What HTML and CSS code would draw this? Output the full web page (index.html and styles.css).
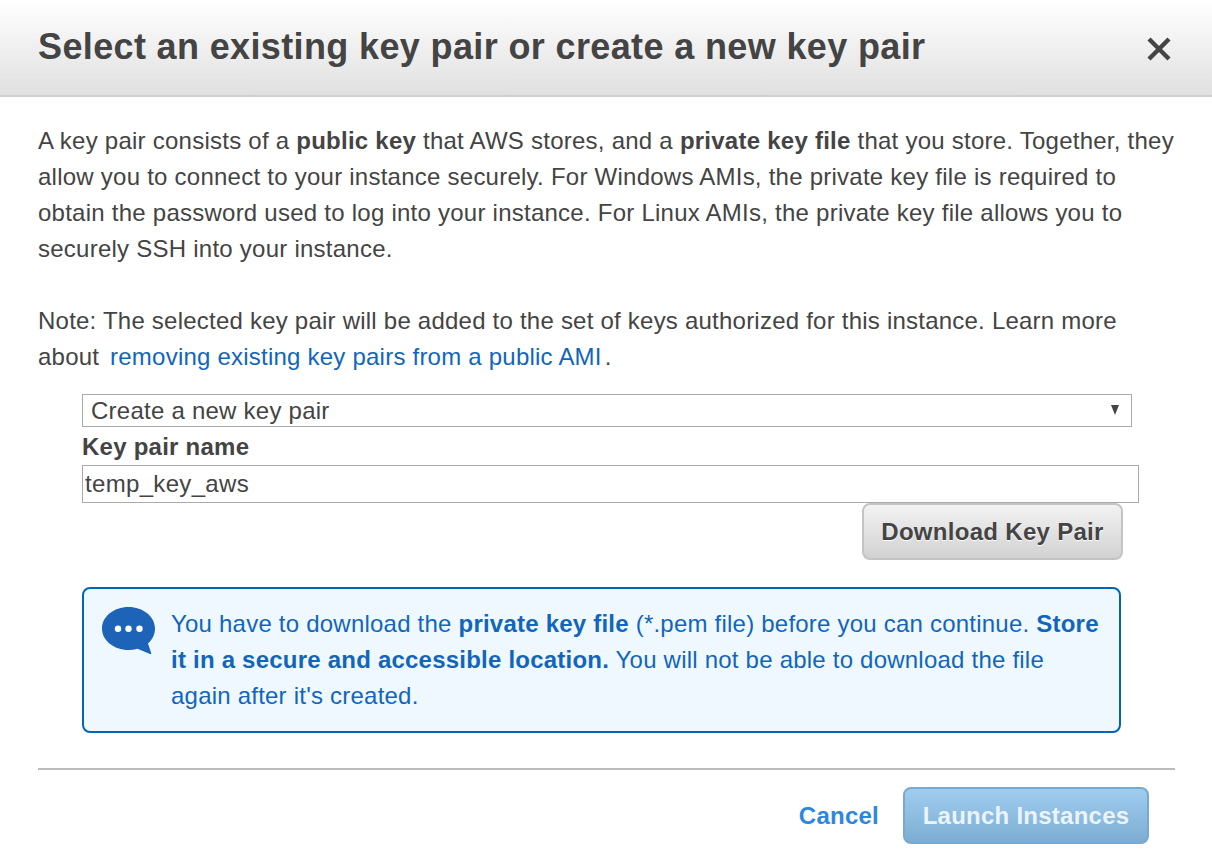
FILE: index.html
```html
<!DOCTYPE html>
<html lang="en">

<head>
    <meta charset="UTF-8">
    <title>Select key pair</title>
    <link rel="stylesheet" href="styles.css">
</head>

<body>
    <div class="dialog">
        <div class="dialog-header">
            <h1>Select an existing key pair or create a new key pair</h1>
            <svg class="close-icon" width="24" height="24" viewBox="0 0 24 24">
                <path d="M2 2L22 22M22 2L2 22" stroke="#444" stroke-width="4.4" fill="none" />
            </svg>
        </div>

        <div class="dialog-body">
            <p>A key pair consists of a <b>public key</b> that AWS stores, and a <b>private key file</b> that you store. Together, they allow you to connect to your instance securely. For Windows AMIs, the private key file is required to obtain the password used to log into your instance. For Linux AMIs, the private key file allows you to securely SSH into your instance.</p>
            <p class="note">Note: The selected key pair will be added to the set of keys authorized for this instance. Learn more about <a class="doc-link" href="#">removing existing key pairs from a public AMI</a>.</p>

            <div class="key-form">
                <div class="select-wrap">
                    <select class="key-select">
                        <option>Create a new key pair</option>
                    </select>
                </div>
                <label class="key-label" for="keyName">Key pair name</label>
                <input class="key-input" id="keyName" type="text" value="temp_key_aws">
                <div class="download-row">
                    <button class="btn-download">Download Key Pair</button>
                </div>

                <div class="info-box">
                    <svg class="info-icon" width="54" height="48" viewBox="0 0 54 48">
                        <path d="M26.500 0C11.900 0 0 9.600 0 21.500C0 33.400 11.900 43 26.500 43C29.500 43 32.500 42.600 35.500 41.800L48 47C49 47.400 49.500 47 49.200 46L46 36.500C50.500 32.500 53 27.300 53 21.500C53 9.600 41.100 0 26.500 0Z" fill="#1d64b8" />
                        <circle cx="16" cy="21.700" r="3.200" fill="#fff" />
                        <circle cx="26.500" cy="21.700" r="3.200" fill="#fff" />
                        <circle cx="37.500" cy="21.700" r="3.200" fill="#fff" />
                    </svg>
                    <div class="info-text">You have to download the <b>private key file</b> (*.pem file) before you can continue. <b>Store it in a secure and accessible location.</b> You will not be able to download the file again after it's created.</div>
                </div>
            </div>
        </div>

        <div class="dialog-footer">
            <a class="cancel-link" href="#">Cancel</a>
            <button class="btn-launch" disabled>Launch Instances</button>
        </div>
    </div>
</body>

</html>
```

FILE: styles.css
```css
body {
    margin: 0;
    background: white;
    color: #444;
    font-family: "Liberation Sans", Arial, sans-serif;
    font-size: 24px;
    line-height: 36px;
    letter-spacing: 0.245px;
}

.dialog {
    width: 1212px;
    height: 868px;
    overflow: hidden;
}

.dialog-header {
    box-sizing: border-box;
    height: 97px;
    display: flex;
    align-items: center;
    justify-content: space-between;
    padding: 0 41px 2px 38px;
    background: linear-gradient(to bottom, #ffffff, #e0e0e0);
    border-bottom: 2px solid #cfcfcf;
}

.dialog-header h1 {
    margin: 0;
    font-size: 36px;
    line-height: 92px;
    font-weight: bold;
    color: #444;
    letter-spacing: 0.365px;
}

.close-icon {
    margin-top: 4px;
}

.dialog-body {
    padding: 26px 37px 0 38px;
}

.dialog-body p {
    margin: 0 0 36px 0;
}

.dialog-body .note {
    margin-bottom: 19px;
    letter-spacing: 0.225px;
}

.doc-link {
    color: #1166bb;
    text-decoration: none;
    padding: 0 3px 0 4px;
}

.key-form {
    padding-left: 44px;
}

.select-wrap {
    position: relative;
    width: 1050px;
}

.select-wrap::after {
    content: "";
    position: absolute;
    top: 11px;
    right: 13px;
    border-left: 4.5px solid transparent;
    border-right: 4.5px solid transparent;
    border-top: 10px solid #444;
}

.key-select {
    display: block;
    width: 100%;
    height: 33px;
    padding: 0 0 0 8px;
    appearance: none;
    background: white;
    border: 1px solid #aaa;
    border-radius: 0;
    color: #444;
    font: 24px "Liberation Sans", Arial, sans-serif;
    letter-spacing: 0.245px;
}

.key-label {
    display: block;
    font-weight: bold;
    height: 38px;
    line-height: 40px;
}

.key-input {
    display: block;
    box-sizing: border-box;
    width: 1057px;
    height: 38px;
    padding: 0 2px;
    border: 1px solid #aaa;
    color: #444;
    font: 24px "Liberation Sans", Arial, sans-serif;
    letter-spacing: 0.33px;
}

.download-row {
    display: flex;
    justify-content: flex-end;
    width: 1041px;
}

.btn-download {
    width: 261px;
    height: 57px;
    padding: 0;
    border: 2px solid #c4c4c4;
    border-radius: 8px;
    background: linear-gradient(to bottom, #f2f2f2, #d2d2d2);
    color: #444;
    font: bold 24px "Liberation Sans", Arial, sans-serif;
    letter-spacing: 0.3px;
    text-shadow: 0 1px 1px white;
}

.info-box {
    display: flex;
    box-sizing: border-box;
    width: 1039px;
    height: 146px;
    margin-top: 27px;
    padding: 17px 16px 0 18px;
    background: #f0f8ff;
    border: 2px solid #0066b4;
    border-radius: 8px;
    color: #1166bb;
}

.info-icon {
    flex-shrink: 0;
    margin-top: 1px;
}

.info-text {
    margin-left: 15px;
    letter-spacing: 0.22px;
}

.dialog-footer {
    display: flex;
    align-items: center;
    justify-content: flex-end;
    gap: 24px;
    margin: 35px 37px 0 38px;
    padding: 17px 26px 0 0;
    border-top: 2px solid #bbb;
}

.cancel-link {
    color: #2e86de;
    font-weight: bold;
    text-decoration: none;
}

.btn-launch {
    width: 246px;
    height: 57px;
    padding: 0;
    border: 2px solid #7aa9d0;
    border-radius: 8px;
    background: linear-gradient(to bottom, #9fcdf0, #7dadd2);
    color: #eaf4fc;
    font: bold 24px "Liberation Sans", Arial, sans-serif;
    letter-spacing: 0.25px;
}
```
